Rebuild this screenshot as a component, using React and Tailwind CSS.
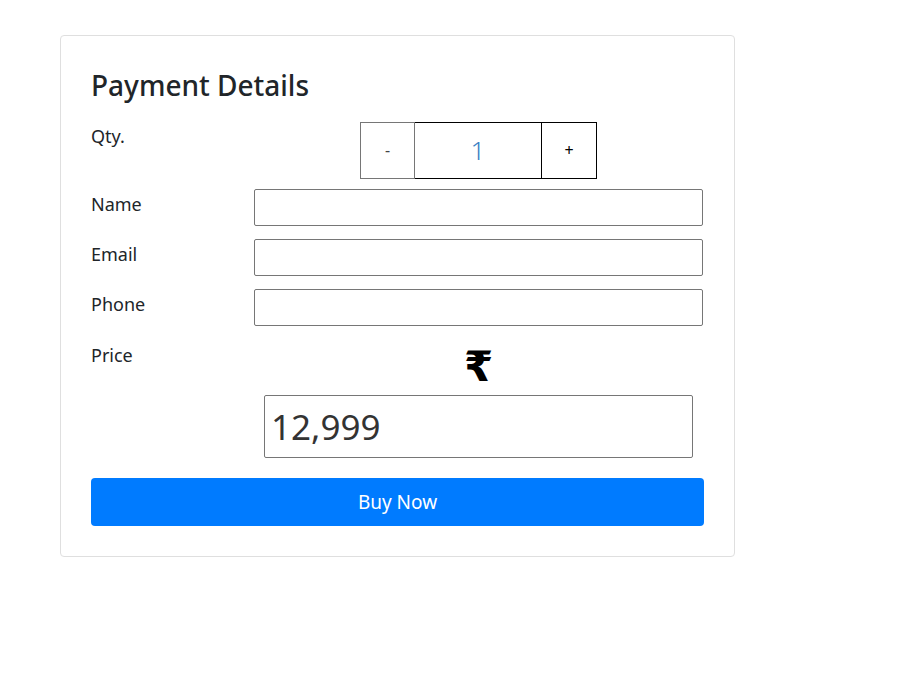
const Field = ({ label }) => (
  <div className="flex items-center mt-[13px]">
    <label className="w-[163px] shrink-0 text-[18px] pb-[6px]">{label}</label>
    <input
      type="text"
      className="w-[449px] h-[37px] border border-[#767676] rounded-[2px] px-2 outline-none"
    />
  </div>
);

const App = () => {
  return (
    <div
      className="min-h-screen bg-white text-[#212529] text-base leading-6"
      style={{ fontFamily: '"Noto Sans", "Open Sans", sans-serif' }}
    >
      <div className="ml-[60px] pt-[35px] w-[675px]">
        <div className="border border-[#dfdfdf] rounded p-[30px]">
          <h3 className="text-[28px] font-medium leading-[1.2] mt-[3px] mb-[19px]">Payment Details</h3>

          <div className="flex items-start">
            <label className="w-[163px] shrink-0 text-[18px] pt-[2px]">Qty.</label>
            <div className="w-[449px] flex justify-center">
              <div className="flex h-[57px]">
                <button className="w-[55px] border border-[#767676] text-[#444] bg-white">-</button>
                <input
                  type="text"
                  defaultValue="1"
                  className="w-[126px] border-y border-black text-center text-[26px] font-light text-[#3a7fc4] outline-none"
                />
                <button className="w-[56px] border border-black text-black bg-white">+</button>
              </div>
            </div>
          </div>

          <div className="mt-[-3px]">
            <Field label="Name" />
            <Field label="Email" />
            <Field label="Phone" />
          </div>

          <div className="flex items-start mt-[17px]">
            <label className="w-[163px] shrink-0 text-[18px]">Price</label>
            <div className="w-[449px] flex flex-col items-center">
              <span
                className="text-[42px] font-bold leading-[44px] text-black pt-[2px]"
                style={{ fontFamily: '"DejaVu Sans", "Noto Sans", sans-serif' }}
              >
                ₹
              </span>
              <input
                type="text"
                defaultValue="12,999"
                className="mt-[6px] w-[429px] h-[63px] border border-[#767676] rounded-[2px] px-[6px] text-[35px] text-[#333] outline-none"
              />
            </div>
          </div>

          <button className="mt-[20px] w-full h-[48px] bg-[#007bff] text-white text-[19px] rounded">
            Buy Now
          </button>
        </div>
      </div>
    </div>
  );
};

export default App;
